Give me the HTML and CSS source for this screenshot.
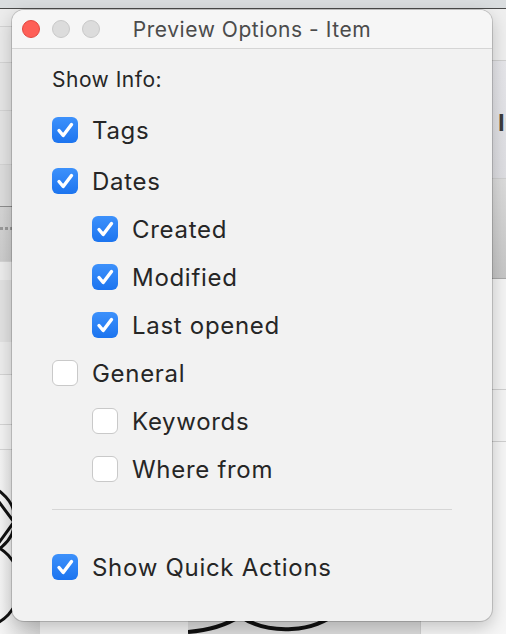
FILE: index.html
```html
<!DOCTYPE html>
<html>
<head>
<meta charset="utf-8">
<link rel="stylesheet" href="styles.css">
</head>
<body>
<div class="desk">
  <div class="topstrip"></div>
  <div class="cols">
    <div class="col left">
      <div class="r r0"></div>
      <div class="r r1"></div>
      <div class="r r2"></div>
      <div class="r r3"></div>
      <div class="r r3b"></div>
      <div class="r r4"><div class="dots"></div></div>
      <div class="r r5"><div class="pill"></div></div>
      <div class="r r6"></div>
      <div class="r r7"></div>
      <div class="r r8">
        <svg width="40" height="170" viewBox="0 0 40 170">
          <ellipse cx="-30" cy="60" rx="45" ry="38" fill="none" stroke="#111" stroke-width="3"/>
          <ellipse cx="-20" cy="125" rx="40" ry="42" fill="none" stroke="#111" stroke-width="3"/>
          <path d="M-10 30 L14 62 L-10 95" fill="none" stroke="#111" stroke-width="3"/>
        </svg>
      </div>
    </div>
    <div class="col mid">
      <div class="midfill"></div>
      <div class="midbottom">
        <div class="mb1"></div>
        <div class="mb2">
          <svg width="232" height="20" viewBox="0 0 232 20">
            <path d="M0 18 C25 16 40 10 52 2" fill="none" stroke="#111" stroke-width="4"/>
            <path d="M52 2 C80 22 130 18 148 -2" fill="none" stroke="#111" stroke-width="4"/>
          </svg>
        </div>
        <div class="mb3"></div>
      </div>
    </div>
    <div class="col right">
      <div class="q q1"></div>
      <div class="q q2"><span class="intext">In</span></div>
      <div class="q q3"></div>
      <div class="q q4"></div>
      <div class="q q5"></div>
      <div class="q q6"></div>
    </div>
  </div>
</div>

<div class="window">
  <div class="titlebar">
    <div class="lights">
      <span class="light close"></span>
      <span class="light"></span>
      <span class="light"></span>
    </div>
    <div class="title">Preview Options - Item</div>
  </div>
  <div class="content">
    <div class="heading">Show Info:</div>
    <div class="row first"><span class="cb on"><svg viewBox="0 0 26 26"><path d="M7 13.5 L11.2 18.5 L19.5 7.5"/></svg></span><span class="label">Tags</span></div>
    <div class="row"><span class="cb on"><svg viewBox="0 0 26 26"><path d="M7 13.5 L11.2 18.5 L19.5 7.5"/></svg></span><span class="label">Dates</span></div>
    <div class="row sub"><span class="cb on"><svg viewBox="0 0 26 26"><path d="M7 13.5 L11.2 18.5 L19.5 7.5"/></svg></span><span class="label">Created</span></div>
    <div class="row sub"><span class="cb on"><svg viewBox="0 0 26 26"><path d="M7 13.5 L11.2 18.5 L19.5 7.5"/></svg></span><span class="label">Modified</span></div>
    <div class="row sub"><span class="cb on"><svg viewBox="0 0 26 26"><path d="M7 13.5 L11.2 18.5 L19.5 7.5"/></svg></span><span class="label">Last opened</span></div>
    <div class="row"><span class="cb"></span><span class="label">General</span></div>
    <div class="row sub"><span class="cb"></span><span class="label">Keywords</span></div>
    <div class="row sub"><span class="cb"></span><span class="label">Where from</span></div>
    <div class="sep"></div>
    <div class="row last"><span class="cb on"><svg viewBox="0 0 26 26"><path d="M7 13.5 L11.2 18.5 L19.5 7.5"/></svg></span><span class="label">Show Quick Actions</span></div>
  </div>
</div>
</body>
</html>
```
FILE: styles.css
```css
html, body {
  margin: 0;
  padding: 0;
}
body {
  width: 506px;
  height: 634px;
  overflow: hidden;
  position: relative;
  font-family: Inter, "Liberation Sans", sans-serif;
  background: #ececec;
}
.desk {
  width: 506px;
  height: 634px;
  display: flex;
  flex-direction: column;
}
.topstrip {
  height: 8px;
  background: #dadddf;
  border-bottom: 1px solid #4a4a4a;
}
.cols {
  flex: 1;
  display: flex;
}
.col {
  display: flex;
  flex-direction: column;
}
.left {
  width: 40px;
}
.r { border-bottom: 1px solid #d4d4d4; box-sizing: border-box; }
.r0 { height: 18px; background: #ececec; }
.r1 { height: 36px; background: #eaeaea; }
.r2 { height: 48px; background: #e6e6e6; }
.r3 { height: 54px; background: #e4e4e4; }
.r3b { height: 42px; background: #dedede; border-bottom: 1px solid #8e8e8e; }
.r4 { height: 55px; background: linear-gradient(#d6d6d6, #cdcdcd); }
.dots {
  margin-top: 20px;
  height: 3px;
  background: repeating-linear-gradient(90deg, #9a9a9a 0 3px, transparent 3px 5px);
}
.r5 { height: 113px; background: #ededed; padding-top: 18px; }
.pill { height: 62px; width: 34px; margin-left: -10px; border-radius: 10px; background: #e2e2e2; }
.r6 { height: 50px; background: #f3f3f3; }
.r7 { height: 25px; background: #f3f3f3; }
.r8 { flex: 1; border: 0; background: linear-gradient(90deg, #f4f4f4, #d6d6d6); overflow: hidden; }
.r8 svg { display: block; margin-top: 10px; }
.mid {
  flex: 1;
}
.midfill { flex: 1; background: #ececec; }
.midbottom { height: 20px; display: flex; }
.mb1 { width: 148px; background: #f2f2f2; }
.mb2 { width: 232px; background: #dcdcdc; overflow: hidden; }
.mb2 svg { display: block; }
.mb3 { flex: 1; background: #f2f2f2; border-left: 1px solid #d0d0d0; }
.right {
  width: 86px;
}
.q { border-bottom: 1px solid #cfcfcf; box-sizing: border-box; }
.q1 { height: 52px; background: #efefef; }
.q2 { height: 118px; background: linear-gradient(#e6e6ea, #dedee2); padding: 48px 0 0 77px; overflow: hidden; white-space: nowrap; }
.intext { font-size: 24px; line-height: 28px; color: #3c3c3c; font-weight: 600; font-family: "Liberation Sans", sans-serif; }
.q3 { height: 100px; background: linear-gradient(#dcdcdc, #c6c6c6); border-bottom-color: #a8a8a8; }
.q4 { height: 111px; background: #f4f4f4; }
.q5 { height: 52px; background: #f4f4f4; }
.q6 { flex: 1; background: #f6f6f6; border: 0; }

.window {
  position: absolute;
  left: 12px;
  top: 10px;
  width: 480px;
  height: 611px;
  background: #f2f2f2;
  border-radius: 12px;
  box-shadow: 0 0 0 1px rgba(0,0,0,0.16), 0 6px 18px rgba(0,0,0,0.22);
  overflow: hidden;
  display: flex;
  flex-direction: column;
}
.titlebar {
  height: 38px;
  background: #f6f6f6;
  border-bottom: 1px solid #d5d5d5;
  display: flex;
  align-items: center;
  position: relative;
}
.lights {
  display: flex;
  gap: 12px;
  padding-left: 10px;
}
.light {
  width: 16px;
  height: 16px;
  border-radius: 50%;
  background: #dcdcdc;
  border: 1px solid #c8c8c8;
}
.light.close {
  background: #fe5f57;
  border-color: #e2463f;
}
.title {
  position: absolute;
  left: 0;
  right: 0;
  top: 0;
  bottom: 0;
  display: flex;
  align-items: center;
  justify-content: center;
  font-size: 21px;
  letter-spacing: 0.55px;
  color: #4b4b4b;
}
.content {
  padding: 19px 0 0 40px;
  color: #262626;
}
.heading {
  font-size: 21px;
  letter-spacing: 0.5px;
  line-height: 24px;
  margin-bottom: 14px;
}
.row {
  height: 48px;
  display: flex;
  align-items: center;
  gap: 14px;
}
.row.first { margin-bottom: 3px; }
.row.sub { padding-left: 40px; }
.label {
  font-size: 24px;
  letter-spacing: 0.7px;
}
.cb {
  width: 26px;
  height: 26px;
  box-sizing: border-box;
  border-radius: 6px;
  background: #ffffff;
  border: 1px solid #c9c9c9;
  display: flex;
  flex-shrink: 0;
}
.cb.on {
  background: linear-gradient(#3d91fb, #1c74ef);
  border: 0;
}
.cb svg {
  width: 26px;
  height: 26px;
}
.cb path {
  fill: none;
  stroke: #fff;
  stroke-width: 3.4;
  stroke-linecap: round;
  stroke-linejoin: round;
}
.sep {
  height: 1px;
  background: #d6d6d6;
  width: 400px;
  margin: 16px 0 33px;
}
```
